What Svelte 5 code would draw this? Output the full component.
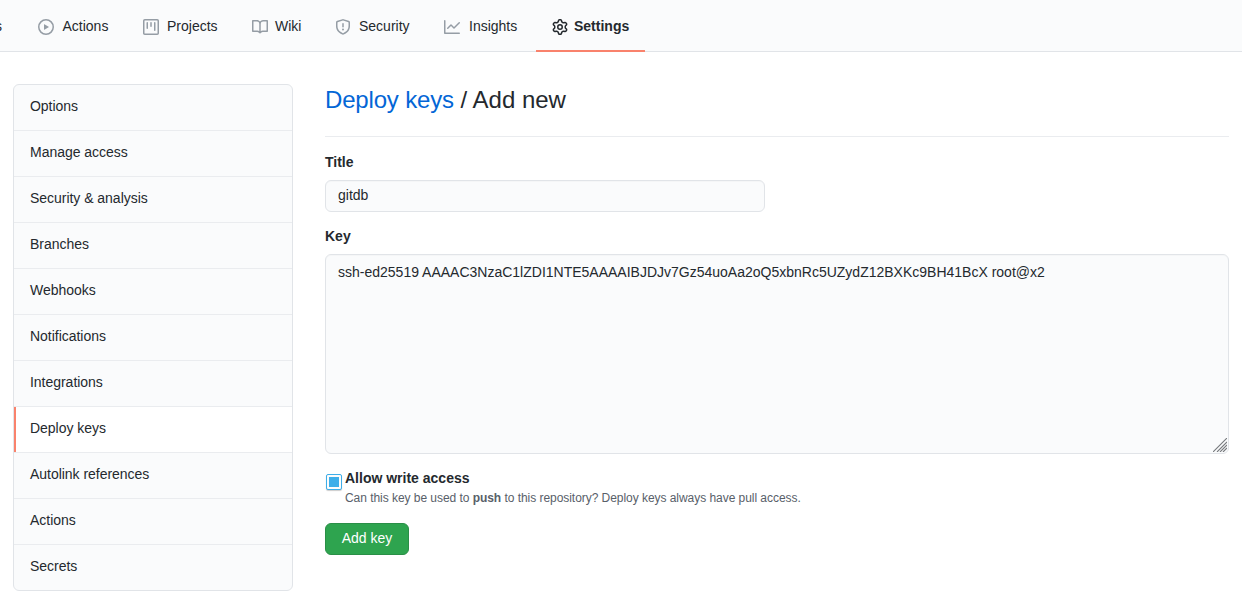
<script>
  const tabs = [
    { name: 'Actions', width: 105, gap: 8.5, paths: ['M1.5 8a6.5 6.5 0 1113 0 6.5 6.5 0 01-13 0zM8 0a8 8 0 100 16A8 8 0 008 0zM6.379 5.227A.25.25 0 006 5.442v5.117a.25.25 0 00.379.214l4.264-2.559a.25.25 0 000-.428L6.379 5.227z'] },
    { name: 'Projects', width: 109, gap: 8, paths: ['M1.75 0A1.75 1.75 0 000 1.75v12.5C0 15.216.784 16 1.75 16h12.5A1.75 1.75 0 0016 14.25V1.75A1.75 1.75 0 0014.25 0H1.75zM1.5 1.75a.25.25 0 01.25-.25h12.5a.25.25 0 01.25.25v12.5a.25.25 0 01-.25.25H1.75a.25.25 0 01-.25-.25V1.75zM11.75 3a.75.75 0 00-.75.75v7.5a.75.75 0 001.5 0v-7.5a.75.75 0 00-.75-.75zm-8.25.75a.75.75 0 011.5 0v5.5a.75.75 0 01-1.5 0v-5.5zM8 3a.75.75 0 00-.75.75v3.5a.75.75 0 001.5 0v-3.5A.75.75 0 008 3z'] },
    { name: 'Wiki', width: 83, gap: 7, paths: ['M0 1.75A.75.75 0 01.75 1h4.253c1.227 0 2.317.59 3 1.501A3.744 3.744 0 0111.006 1h4.245a.75.75 0 01.75.75v10.5a.75.75 0 01-.75.75h-4.507a2.25 2.25 0 00-1.591.659l-.622.621a.75.75 0 01-1.06 0l-.622-.621A2.25 2.25 0 005.258 13H.75a.75.75 0 01-.75-.75V1.75zm8.755 3a2.25 2.25 0 012.25-2.25H14.5v9h-3.757c-.71 0-1.4.201-1.992.572l.004-7.322zm-1.504 7.324l.004-5.073-.002-2.253A2.25 2.25 0 005.003 2.5H1.5v9h3.757a3.75 3.75 0 011.994.574z'] },
    { name: 'Security', width: 109, gap: 8, paths: ['M7.467.133a1.75 1.75 0 011.066 0l5.25 1.68A1.75 1.75 0 0115 3.48V7c0 1.566-.32 3.182-1.303 4.682-.983 1.498-2.585 2.813-5.032 3.855a1.7 1.7 0 01-1.33 0c-2.447-1.042-4.049-2.357-5.032-3.855C1.32 10.182 1 8.566 1 7V3.48a1.75 1.75 0 011.217-1.667l5.25-1.68zm.61 1.429a.25.25 0 00-.153 0l-5.25 1.68a.25.25 0 00-.174.238V7c0 1.358.275 2.666 1.057 3.86.784 1.194 2.121 2.34 4.366 3.297a.2.2 0 00.154 0c2.245-.956 3.582-2.104 4.366-3.298C13.225 9.666 13.5 8.36 13.5 7V3.48a.25.25 0 00-.174-.237l-5.25-1.68zM9 10.5a1 1 0 11-2 0 1 1 0 012 0zm-.25-5.75a.75.75 0 10-1.5 0v3a.75.75 0 001.5 0v-3z'] },
    { name: 'Insights', width: 108, gap: 9, paths: ['M1.5 1.75a.75.75 0 00-1.5 0v12.5c0 .414.336.75.75.75h14.5a.75.75 0 000-1.5H1.5V1.75zm14.28 2.53a.75.75 0 00-1.06-1.06L10 7.94 7.53 5.47a.75.75 0 00-1.06 0L3.22 8.72a.75.75 0 001.06 1.06L7 7.06l2.47 2.47a.75.75 0 001.06 0l5.25-5.25z'] },
    { name: 'Settings', width: 109, gap: 6, current: true, paths: ['M7.429 1.525a6.593 6.593 0 011.142 0c.036.003.108.036.137.146l.289 1.105c.147.56.55.967.997 1.189.174.086.341.183.501.29.417.278.97.423 1.53.27l1.102-.303c.11-.03.175.016.195.046.219.31.41.641.573.989.014.031.022.11-.059.19l-.815.806c-.411.406-.562.957-.53 1.456a4.588 4.588 0 010 .582c-.032.499.119 1.05.53 1.456l.815.806c.08.08.073.159.059.19a6.494 6.494 0 01-.573.99c-.02.029-.086.074-.195.045l-1.103-.303c-.559-.153-1.112-.008-1.529.27-.16.107-.327.204-.5.29-.449.222-.851.628-.998 1.189l-.289 1.105c-.029.11-.101.143-.137.146a6.613 6.613 0 01-1.142 0c-.036-.003-.108-.037-.137-.146l-.289-1.105c-.147-.56-.55-.967-.997-1.189a4.502 4.502 0 01-.501-.29c-.417-.278-.97-.423-1.53-.27l-1.102.303c-.11.03-.175-.016-.195-.046a6.492 6.492 0 01-.573-.989c-.014-.031-.022-.11.059-.19l.815-.806c.411-.406.562-.957.53-1.456a4.587 4.587 0 010-.582c.032-.499-.119-1.05-.53-1.456l-.815-.806c-.08-.08-.073-.159-.059-.19a6.44 6.44 0 01.573-.99c.02-.029.086-.075.195-.045l1.103.303c.559.153 1.112.008 1.529-.27.16-.107.327-.204.5-.29.449-.222.851-.628.998-1.189l.289-1.105c.029-.11.101-.143.137-.146zM8 0c-.236 0-.47.01-.701.03-.743.065-1.29.615-1.458 1.261l-.29 1.106c-.017.066-.078.158-.211.224a5.994 5.994 0 00-.668.386c-.123.082-.233.09-.3.071L3.27 2.776c-.644-.177-1.392.02-1.82.63a7.977 7.977 0 00-.704 1.217c-.315.675-.111 1.422.363 1.891l.815.806c.05.048.098.147.088.294a6.084 6.084 0 000 .772c.01.147-.038.246-.088.294l-.815.806c-.474.469-.678 1.216-.363 1.891.2.428.436.835.704 1.218.428.609 1.176.806 1.82.63l1.103-.303c.066-.019.176-.011.299.071.213.143.436.272.668.386.133.066.194.158.212.224l.289 1.106c.169.646.715 1.196 1.458 1.26a8.094 8.094 0 001.402 0c.743-.064 1.29-.614 1.458-1.26l.29-1.106c.017-.066.078-.158.211-.224a5.98 5.98 0 00.668-.386c.123-.082.233-.09.3-.071l1.102.302c.644.177 1.392-.02 1.82-.63.268-.382.505-.789.704-1.217.315-.675.111-1.422-.364-1.891l-.814-.806c-.05-.048-.098-.147-.088-.294a6.1 6.1 0 000-.772c-.01-.147.039-.246.088-.294l.814-.806c.475-.469.679-1.216.364-1.891a7.992 7.992 0 00-.704-1.218c-.428-.609-1.176-.806-1.82-.63l-1.103.303c-.066.019-.176.011-.299-.071a5.991 5.991 0 00-.668-.386c-.133-.066-.194-.158-.212-.224L10.16 1.29C9.99.645 9.444.095 8.701.031A8.094 8.094 0 008 0z', 'M9.5 8a1.5 1.5 0 11-3 0 1.5 1.5 0 013 0zM11 8a3 3 0 11-6 0 3 3 0 016 0z'] }
  ];

  const menu = ['Options', 'Manage access', 'Security & analysis', 'Branches', 'Webhooks', 'Notifications', 'Integrations', 'Deploy keys', 'Autolink references', 'Actions', 'Secrets'];
  const active = 'Deploy keys';

  let title = $state('gitdb');
  let key = $state('ssh-ed25519 AAAAC3NzaC1lZDI1NTE5AAAAIBJDJv7Gz54uoAa2oQ5xbnRc5UZydZ12BXKc9BH41BcX root@x2');
  let writable = $state(true);
</script>

<nav class="tabs">
  <a class="tab clipped" href="#pulls"><span>Pull requests</span></a>
  {#each tabs as tab}
    <a class="tab" class:current={tab.current} href="#{tab.name}" style:width="{tab.width}px" style:gap="{tab.gap}px">
      <svg width="16" height="16" viewBox="0 0 16 16" fill-rule="evenodd">
        {#each tab.paths as d}<path {d} />{/each}
      </svg>
      <span>{tab.name}</span>
    </a>
  {/each}
</nav>

<div class="layout">
  <aside class="menu">
    {#each menu as item}
      <a class="item" class:selected={item === active} href="#{item}">{item}</a>
    {/each}
  </aside>

  <main>
    <h2><a href="#keys">Deploy keys</a> / Add new</h2>
    <label class="name" for="title">Title</label>
    <input class="field" id="title" type="text" bind:value={title} />
    <label class="name" for="key">Key</label>
    <div class="area">
      <textarea class="field" id="key" spellcheck="false" bind:value={key}></textarea>
      <svg class="grip" width="14" height="14" viewBox="0 0 14 14">
        <path d="M0 14L14 0M4 14L14 4M7 14L14 7M10 14L14 10" />
      </svg>
    </div>
    <div class="check">
      <input type="checkbox" id="write" bind:checked={writable} />
      <div>
        <label for="write">Allow write access</label>
        <p>Can this key be used to <strong>push</strong> to this repository? Deploy keys always have pull access.</p>
      </div>
    </div>
    <button type="button">Add key</button>
  </main>
</div>

<style>
  :global(body) {
    background: #fff;
    color: #24292e;
    font: 14px/21px "Liberation Sans", Arial, sans-serif;
    overflow: hidden;
  }
  * { box-sizing: border-box; }
  a { color: inherit; text-decoration: none; }
  .tabs {
    display: flex;
    height: 52px;
    background: #fafbfc;
    border-bottom: 1px solid #e1e4e8;
  }
  .tab {
    display: flex;
    flex: none;
    align-items: center;
    height: 52px;
    padding: 3px 0 2px 16px;
    white-space: nowrap;
  }
  .tab svg { fill: #959da5; flex: none; margin-top: 1px; }
  .tab span { margin-top: -1px; }
  .clipped {
    width: 22px;
    padding-left: 0;
    padding-right: 20px;
    justify-content: flex-end;
  }
  .current {
    font-weight: 600;
    padding-bottom: 0;
    border-bottom: 2px solid #f9826c;
  }
  .tab.current svg { fill: #24292e; }
  .layout {
    display: flex;
    gap: 32px;
    padding: 32px 13px 0;
  }
  .menu {
    flex: none;
    width: 280px;
    border: 1px solid #e1e4e8;
    border-radius: 6px;
    overflow: hidden;
    background: #fafbfc;
  }
  .item {
    display: block;
    height: 46px;
    padding: 11px 16px;
    border-bottom: 1px solid #eaecef;
    letter-spacing: -0.03px;
  }
  .item:last-child { border-bottom: 0; height: 45px; }
  .selected { background: #fff; box-shadow: inset 2px 0 #f9826c; }
  main { flex: 1; min-width: 0; }
  h2 {
    margin: 0 0 15px;
    height: 53px;
    border-bottom: 1px solid #eaecef;
    font-size: 24px;
    line-height: 32px;
    font-weight: 400;
  }
  h2 a { color: #0366d6; letter-spacing: -0.17px; }
  .name {
    display: block;
    margin-bottom: 7px;
    font-weight: 600;
  }
  .field {
    display: block;
    margin: 0;
    border: 1px solid #e1e4e8;
    border-radius: 6px;
    background: #fafbfc;
    box-shadow: inset 0 1px 0 rgba(225, 228, 232, 0.2);
    color: #24292e;
    font: inherit;
    outline: none;
  }
  input.field {
    width: 440px;
    height: 32px;
    margin-bottom: 14px;
    padding: 4px 12px 6px;
    line-height: 20px;
  }
  .area { position: relative; }
  textarea {
    width: 100%;
    height: 200px;
    padding: 7px 12px;
    resize: none;
  }
  .grip {
    position: absolute;
    right: 2px;
    bottom: 2px;
    fill: none;
    stroke: #777a7d;
    stroke-width: 1.1;
  }
  .check {
    display: flex;
    gap: 3px;
    margin-top: 14px;
    padding-left: 1px;
  }
  .check input {
    appearance: none;
    flex: none;
    width: 16px;
    height: 16px;
    margin: 6px 0 0;
    border: 1px solid #3daee9;
    border-radius: 2px;
    box-shadow: 0 1px 1px rgba(0, 0, 0, 0.2);
  }
  .check input:checked {
    background: linear-gradient(#3daee9, #3daee9) center / 10px 10px no-repeat, #fcfcfc;
  }
  .check label { display: block; font-weight: 600; }
  .check p {
    margin: 0;
    color: #586069;
    font-size: 12px;
    line-height: 18px;
    letter-spacing: -0.045px;
  }
  button {
    display: block;
    width: 84px;
    height: 32px;
    margin-top: 16px;
    padding: 0 0 2px;
    border: 1px solid #2a8f47;
    border-radius: 6px;
    background: #2ea44f;
    color: #fff;
    font: inherit;
  }
</style>
